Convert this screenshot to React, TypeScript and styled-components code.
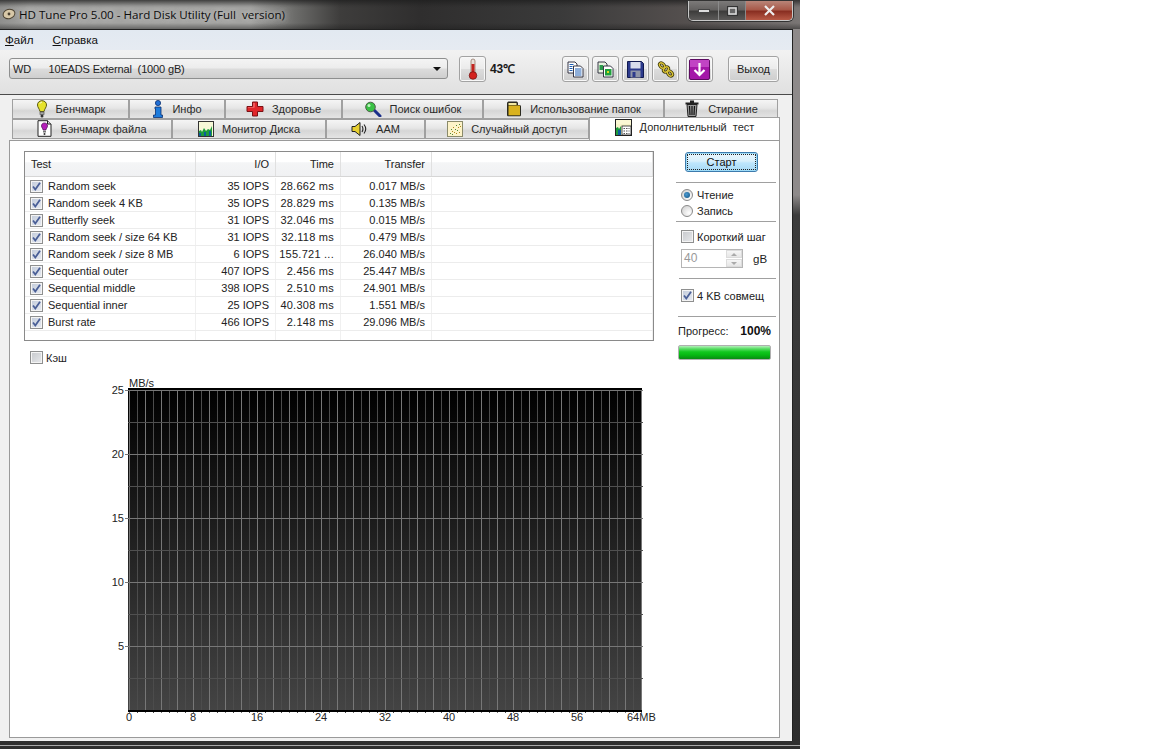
import React from "react";
import styled, { createGlobalStyle } from "styled-components";

const Global = createGlobalStyle`
  html, body { margin: 0; padding: 0; background: #fff; }
  body { font-family: "Liberation Sans", Arial, sans-serif; font-size: 11px; color: #222; overflow: hidden; }
  * { box-sizing: border-box; }
`;

const Win = styled.div`
  width: 800px; height: 749px; display: flex; flex-direction: column;
  background:
    linear-gradient(#a8a8a8, #a8a8a8) 0 745px / 100% 1px no-repeat,
    linear-gradient(180deg, #8e8a8a 0, #8e8a8a 195px, #3c3c3c 215px, #2e2e2e 100%);
`;
const TitleBar = styled.div`
  height: 29px; flex: none; display: flex; align-items: flex-start; padding-right: 7px;
  background:
    linear-gradient(180deg, rgba(30,30,30,.75) 0, rgba(30,30,30,.1) 6px, transparent 8px, transparent 23px, rgba(30,30,30,.45) 29px),
    linear-gradient(90deg, #8f8f8d 0, #a3a3a1 30px, #a3a3a1 250px, #6c6c6a 295px, #3e3d3c 340px, #2f2e2e 420px, #3a3a3a 560px, #55504f 690px, #7a7675 800px);
`;
const TitleWrap = styled.div`
  flex: 1; height: 29px; display: flex; align-items: center; gap: 3px; padding: 0 0 1px 2px;
`;
const TitleText = styled.span`
  font-family: "Open Sans", sans-serif; font-size: 11.6px; color: #0c0c0c; white-space: pre;
  text-shadow: 0 0 5px #ccc, 0 0 9px #bbb;
`;
const WinBtns = styled.div`
  display: flex; height: 20px; margin-top: 1px; border: 1px solid #c8c8c8; border-top: none;
  border-radius: 0 0 5px 5px; overflow: hidden; box-shadow: 0 0 0 1px #333;
`;
const WinBtn = styled.div<{ $w: number; $close?: boolean }>`
  width: ${p => p.$w}px; display: flex; align-items: center; justify-content: center;
  border-left: 1px solid #8a8a8a;
  background: ${p => p.$close
    ? "linear-gradient(180deg,#b98578 0,#a85a4a 45%,#8a2f22 55%,#b85a46 100%)"
    : "linear-gradient(180deg,#7c7a79 0,#646261 45%,#3e3d3c 55%,#5c5a59 100%)"};
  &:first-child { border-left: none; }
`;
const Client = styled.div`
  flex: 1; margin: 0 7px 8px 0; display: flex; flex-direction: column; min-height: 0;
  background: #f0f0f0; border-top: 1px solid #222; border-right: 1px solid #222;
`;
const MenuBar = styled.div`
  height: 20px; flex: none; display: flex; align-items: center; gap: 19px; padding: 0 0 1px 5px;
  background: linear-gradient(180deg, #e2e9f1 0, #e6ebf2 100%); font-size: 11.6px;
`;
const MenuItem = styled.span`
  color: #111;
  & u { text-decoration: underline; }
`;
const Toolbar = styled.div`
  height: 45px; flex: none; display: flex; align-items: flex-start; padding: 6px 13px 0 9px;
  background: linear-gradient(180deg, #f2f2f2 0, #e0e0e0 100%); border-bottom: 1px solid #4a4a4a;
`;
const Combo = styled.div`
  width: 440px; height: 21px; margin-top: 2px; display: flex; align-items: center; padding: 0 6px 0 3px;
  border: 1px solid #8e8f8f; border-radius: 3px; white-space: pre; color: #222;
  background: linear-gradient(180deg, #f4f4f4 0, #ececec 48%, #dcdcdc 52%, #cfcfcf 100%);
  & > span { flex: 1; letter-spacing: -.15px; }
`;
const ComboArrow = styled.i`
  width: 0; height: 0; border: 4px solid transparent; border-top: 4px solid #111; border-bottom: none;
`;
const IconBtn = styled.div<{ $ml?: number; $w?: number }>`
  width: ${p => p.$w ?? 27}px; height: 26px; margin-left: ${p => p.$ml ?? 3}px; flex: none;
  display: flex; align-items: center; justify-content: center; color: #222;
  border: 1px solid #a2a2a2; border-radius: 3px; box-shadow: inset 0 0 0 1px #f8f8f8;
  background: linear-gradient(180deg, #f6f6f6 0, #ebebeb 48%, #dcdcdc 52%, #cdcdcd 100%);
`;
const Temp = styled.b`
  margin: 0 44px 0 4px; width: 28px; height: 26px; line-height: 27px; font-size: 12px; color: #1a1a1a; letter-spacing: -.3px;
`;
const TabsArea = styled.div`
  flex: none; padding: 4px 0 0 12px; position: relative; z-index: 1; height: 45px;
`;
const TabRow = styled.div`
  display: flex; height: 20px; align-items: flex-end;
`;
const Tab = styled.div<{ $w: number; $active?: boolean }>`
  width: ${p => p.$w}px; height: ${p => (p.$active ? 23 : 20)}px; flex: none; display: flex;
  align-items: center; justify-content: center; gap: 8px; white-space: pre; color: #2a2a2a;
  border: 1px solid #a0a0a0; border-bottom: ${p => (p.$active ? "none" : "1px solid #a0a0a0")};
  background: ${p => p.$active ? "#fff" : "linear-gradient(180deg,#f5f5f5 0,#e6e6e6 45%,#d6d6d6 60%,#e4e4e4 100%)"};
  position: relative; padding-bottom: ${p => (p.$active ? 4 : 1)}px;
  margin-bottom: ${p => (p.$active ? -1 : 0)}px;
`;
const Panel = styled.div`
  flex: 1; min-height: 0; margin: 0 12px 3px 9px; background: #fff; border: 1px solid #9a9a9a;
  display: flex; gap: 22px; padding: 10px 0 0 14px;
`;
const Left = styled.div`
  width: 630px; flex: none; display: flex; flex-direction: column;
`;
const Table = styled.div`
  height: 190px; border: 1px solid #8a8a8a; display: flex; flex-direction: column; overflow: hidden;
`;
const Cols = styled.div`
  display: grid; grid-template-columns: 171px 80px 65px 91px 1fr;
`;
const HeadRow = styled(Cols)`
  height: 25px; flex: none; border-bottom: 1px solid #d6d6d6;
  background: linear-gradient(180deg, #fff 0, #fff 40%, #f4f5f6 45%, #f0f1f3 100%);
`;
const HeadCell = styled.div<{ $left?: boolean }>`
  display: flex; align-items: center; justify-content: ${p => (p.$left ? "flex-start" : "flex-end")};
  padding: ${p => (p.$left ? "0 0 0 6px" : "0 6px 0 0")}; border-right: 1px solid #e0e0e0; color: #222;
`;
const Row = styled(Cols)`
  height: 17px; flex: none; border-bottom: 1px solid #ececec;
`;
const EmptyRow = styled(Cols)`
  flex: 1;
`;
const Cell = styled.div<{ $left?: boolean; $ls?: number }>`
  display: flex; align-items: center; gap: 5px; white-space: nowrap; overflow: hidden; color: #222;
  letter-spacing: ${p => p.$ls ?? 0}px;
  justify-content: ${p => (p.$left ? "flex-start" : "flex-end")};
  padding: ${p => (p.$left ? "0 0 0 5px" : "0 6px 1px 0")}; border-right: 1px solid #f0f0f0;
`;
const RowLabel = styled.span`
  margin-top: -1px;
`;
const RowsTop = styled.div`
  height: 1px; flex: none;
`;
const Box = styled.div<{ $on?: boolean }>`
  width: 13px; height: 13px; flex: none; border: 1px solid #8e8f8f; display: flex; align-items: center; justify-content: center;
  box-shadow: inset 0 0 0 1px #f4f4f4;
  background: ${p => p.$on ? "linear-gradient(135deg, #c2cbda 0, #e8ebf2 100%)" : "linear-gradient(135deg, #c6c8cc 0, #e8e9ec 100%)"};
`;
const CheckLine = styled.label<{ $mt?: number }>`
  display: flex; align-items: center; gap: 3px; height: 13px; margin-top: ${p => p.$mt ?? 0}px; color: #222; white-space: nowrap;
`;
const CacheLine = styled(CheckLine)`
  margin: 10px 0 0 6px;
`;
const ChartSvg = styled.svg`
  display: block; margin: 11px 0 0 76px; font-family: "Liberation Sans", Arial, sans-serif; font-size: 11px; fill: #222;
`;
const Side = styled.div`
  width: 100px; flex: none; display: flex; flex-direction: column;
`;
const StartBtn = styled.div`
  width: 73px; height: 20px; margin: 1px 0 0 9px; display: flex; align-items: center; justify-content: center; color: #111;
  border: 1px solid #3d7bad; border-radius: 3px; outline: 1px dotted #222; outline-offset: -3px;
  box-shadow: inset 0 0 0 1px #9fdcf8;
  background: linear-gradient(180deg, #eaf6fd 0, #d9f0fc 45%, #bee6fd 55%, #a7d9f5 100%);
`;
const Sep = styled.div<{ $mt: number; $ml?: number }>`
  height: 1px; background: #a0a0a0; margin: ${p => p.$mt}px 0 0 ${p => p.$ml ?? 0}px;
`;
const RadioLine = styled.div<{ $mt: number }>`
  display: flex; align-items: center; gap: 4px; height: 12px; margin: ${p => p.$mt}px 0 0 5px; color: #222;
`;
const Radio = styled.div<{ $on?: boolean }>`
  width: 12px; height: 12px; border-radius: 50%; border: 1px solid #8a8a8a; display: flex; align-items: center; justify-content: center;
  background: radial-gradient(circle at 70% 70%, #fff 0, #d6d6d6 80%);
  &::after { content: ""; width: 6px; height: 6px; border-radius: 50%; background: ${p => (p.$on ? "radial-gradient(circle at 40% 40%,#4a9ad0,#0f4f80)" : "transparent")}; }
`;
const SideCheck = styled(CheckLine)`
  margin-left: 5px;
`;
const SpinLine = styled.div`
  display: flex; align-items: center; margin: 6px 0 0 5px; height: 19px;
`;
const Spin = styled.div`
  width: 62px; height: 19px; border: 1px solid #b5b5b5; display: flex; background: #fff;
`;
const SpinVal = styled.div`
  flex: 1; color: #999; padding-left: 2px; line-height: 17px; font-size: 12px;
`;
const SpinBtns = styled.div`
  width: 16px; display: flex; flex-direction: column; gap: 1px;
`;
const SpinBtn = styled.div<{ $up?: boolean }>`
  flex: 1; display: flex; align-items: center; justify-content: center; border: 1px solid #dcdcdc;
  background: linear-gradient(180deg, #f6f6f6, #e6e6e6);
  &::after { content: ""; border: 3px solid transparent; ${p => (p.$up ? "border-bottom: 3px solid #aaa; border-top: none;" : "border-top: 3px solid #aaa; border-bottom: none;")} }
`;
const SpinUnit = styled.span`
  margin-left: 10px; color: #222; font-size: 11.5px;
`;
const ProgressHead = styled.div`
  display: flex; justify-content: space-between; width: 93px; margin: 7px 0 0 2px; color: #222; height: 14px; align-items: center;
  & b { color: #111; font-size: 12px; }
`;
const Bar = styled.div`
  width: 93px; height: 15px; margin: 7px 0 0 2px; border: 1px solid #b0b0b0; border-radius: 2px;
  background: linear-gradient(180deg, #b4f0ba 0, #58dc64 22%, #12c81f 45%, #06b812 70%, #0a8a14 100%);
`;

/* ---------- icons ---------- */
const S: React.FC<{ w?: number; h?: number; children: React.ReactNode }> = ({ w = 16, h = 16, children }) => (
  <svg width={w} height={h} viewBox={`0 0 ${w} ${h}`} style={{ flex: "none" }}>{children}</svg>
);
const BulbIcon = () => (
  <S w={12} h={18}>
    <path d="M6 .7C3.2.7 1.500 2.600 1.500 5c0 2.400 2 3.800 2.500 6.500h4C8.500 8.800 10.500 7.400 10.500 5 10.500 2.600 8.800.7 6 .7z" fill="#e6e22c" stroke="#5b5a10" />
    <rect x="4" y="12" width="4" height="2.500" fill="#aaa" stroke="#555" strokeWidth=".7" />
    <circle cx="6" cy="16" r="1.500" fill="#333" />
    <path d="M4 3.500c.5-1 1-1.300 2-1.300" stroke="#fff" fill="none" />
  </S>
);
const InfoIcon = () => (
  <S w={12} h={18}>
    <circle cx="6" cy="3" r="2.600" fill="#1f6fd6" stroke="#0a2f70" strokeWidth=".8" />
    <path d="M3 7h6v8h1.500v2.500h-9V15H3.500v-6H3z" fill="#1c7bdc" stroke="#0a2f70" strokeWidth=".8" />
  </S>
);
const CrossIcon = () => (
  <S w={18} h={16}>
    <path d="M6.500 1h5v4.500H17v5h-5.500V15h-5v-4.500H1v-5h5.500z" fill="#e0262a" stroke="#7a1014" />
    <path d="M7.500 2h1v4.500H2v-.6h5.500z" fill="#f88" />
  </S>
);
const SearchIcon = () => (
  <S w={18} h={16}>
    <path d="M10 9l6 6" stroke="#1a2f8a" strokeWidth="3" strokeLinecap="round" />
    <circle cx="6.500" cy="6" r="4.800" fill="#39c144" stroke="#4f5f4a" />
    <circle cx="5" cy="4.500" r="1.500" fill="#c4f4c4" />
  </S>
);
const FolderIcon = () => (
  <S w={16} h={17}>
    <path d="M1 3.500C1 2 2 1.500 3 1.500h7c1 0 2 .5 2 2V5h1.500c.8 0 1.500.6 1.500 1.500V15c0 .8-.6 1.300-1.500 1.300h-11C1.600 16.300 1 15.800 1 15z" fill="#2b2a20" />
    <rect x="2.500" y="5.500" width="11.500" height="9.800" fill="#d9b21e" />
    <rect x="2.500" y="3" width="8" height="2" fill="#f2e8a0" />
  </S>
);
const TrashIcon = () => (
  <S w={16} h={17}>
    <path d="M6 1.500h4M1.500 3.500h13" stroke="#222" strokeWidth="2" />
    <path d="M3 4.500h10l-1 12H4z" fill="#999" stroke="#222" />
    <path d="M5.500 6l.5 9M8 6v9M10.500 6l-.5 9" stroke="#111" strokeWidth="1.200" />
  </S>
);
const FileBulbIcon = () => (
  <S w={15} h={17}>
    <path d="M1 .7h9.500L14 4v12.300H1z" fill="#fff" stroke="#222" />
    <path d="M10.500.7V4H14" fill="#ddd" stroke="#222" />
    <path d="M7.500 3C5.500 3 4.500 4.300 4.500 6c0 1.500 1.300 2.300 1.600 4h2.800c.3-1.700 1.600-2.500 1.600-4C10.500 4.300 9.500 3 7.500 3z" fill="#b41fb8" stroke="#4a0b50" strokeWidth=".7" />
    <rect x="6" y="10.700" width="3" height="1.800" fill="#777" />
    <circle cx="7.500" cy="14" r="1" fill="#333" />
  </S>
);
const MonitorIcon = () => (
  <S w={16} h={16}>
    <rect x=".5" y=".5" width="15" height="15" fill="#f6f8d8" stroke="#333" />
    <path d="M1 15V10l2-1 1 2 2-4 2 3 2-2 2 1 2-4v10z" fill="#1c9c3c" />
    <path d="M1 15v-3h2v3zM6 15v-4h2v4zM11 15v-5h2v5z" fill="#0d5c9c" />
  </S>
);
const SpeakerIcon = () => (
  <S w={17} h={16}>
    <path d="M1 5.500h3L9 1.500v13L4 10.500H1z" fill="#e8d030" stroke="#222" />
    <path d="M11 5c1 1.600 1 4.400 0 6M13 3.500c2 2.600 2 6.400 0 9" stroke="#222" fill="none" strokeWidth="1.100" />
  </S>
);
const ScatterIcon = () => (
  <S w={16} h={16}>
    <rect x=".5" y=".5" width="15" height="15" fill="#fdf3c8" stroke="#8a8a6a" />
    {[[3,12],[5,10],[4,8],[7,11],[8,8],[6,6],[10,9],[11,6],[9,4],[13,5],[12,3],[12,11],[5,13],[9,12]].map(([x, y], i) => (
      <rect key={i} x={x} y={y} width="1" height="1" fill={i % 2 ? "#b08a1c" : "#4c8a3a"} />
    ))}
  </S>
);
const CalcIcon = () => (
  <S w={17} h={17}>
    <rect x=".5" y=".5" width="16" height="16" fill="#f6f4c8" stroke="#222" />
    <rect x="1" y="1" width="15" height="4" fill="#fbf8d4" />
    <path d="M1 16V9l2-1 1 2 2-3v9z" fill="#1c9c3c" />
    <rect x="3" y="11" width="3" height="5" fill="#0d5c9c" />
    <rect x="7" y="7" width="9" height="9" fill="#fff" stroke="#222" strokeWidth=".8" />
    <path d="M8.500 9.500h6M8.500 12h6M8.500 14.500h6" stroke="#555" strokeDasharray="1.500 1" />
  </S>
);
const ThermoIcon = () => (
  <S w={12} h={22}>
    <rect x="4" y="1" width="4" height="15" rx="2" fill="#e7dfd8" stroke="#8a6a5a" strokeWidth=".7" />
    <rect x="4.500" y="6" width="3" height="10" fill="#c22420" />
    <circle cx="6" cy="17.500" r="3.800" fill="#d3221e" stroke="#6b1010" strokeWidth=".7" />
  </S>
);
const CopyIcon = () => (
  <S w={17} h={17}>
    <path d="M1 1h7l2 2v9H1z" fill="#fff" stroke="#223" strokeWidth=".9" />
    <path d="M6.500 5h7l2.500 2.500V16H6.500z" fill="#fff" stroke="#223" strokeWidth=".9" />
    <path d="M2.500 3.500h4M2.500 5.500h3M2.500 7.500h3M2.500 9.500h3" stroke="#1f5fb4" />
    <path d="M8 8h6.500M8 10h6.500M8 12h6.500M8 14h6.500" stroke="#1f5fb4" />
  </S>
);
const CopyImgIcon = () => (
  <S w={17} h={17}>
    <path d="M1 1h7l2 2v9H1z" fill="#e8f2e0" stroke="#223" strokeWidth=".9" />
    <path d="M6.500 5h7l2.500 2.500V16H6.500z" fill="#fff" stroke="#223" strokeWidth=".9" />
    <rect x="2.500" y="4" width="3.500" height="5" fill="#2a9a4a" />
    <rect x="8" y="8" width="6.500" height="6.500" fill="#1fa03c" />
    <rect x="10" y="10" width="2" height="2" fill="#d8d820" />
  </S>
);
const FloppyIcon = () => (
  <S w={17} h={17}>
    <path d="M.5.5h14l2 2v14H.5z" fill="#2c3a8c" stroke="#111a50" />
    <rect x="3.500" y="1" width="10" height="6.500" fill="#d8dcec" />
    <rect x="3.500" y="9.500" width="10" height="7" fill="#8f96a8" />
    <rect x="5.500" y="11" width="3" height="5" fill="#2c3a8c" />
  </S>
);
const ChainIcon = () => (
  <S w={18} h={17}>
    <g fill="none" strokeWidth="3" stroke="#3e3a0c">
      <ellipse cx="5" cy="4.500" rx="3" ry="2" transform="rotate(45 5 4.500)" />
      <ellipse cx="9" cy="8.500" rx="3" ry="2" transform="rotate(-45 9 8.500)" />
      <ellipse cx="13" cy="12.500" rx="3" ry="2" transform="rotate(45 13 12.500)" />
    </g>
    <g fill="none" strokeWidth="1.400" stroke="#dcc438">
      <ellipse cx="5" cy="4.500" rx="3" ry="2" transform="rotate(45 5 4.500)" />
      <ellipse cx="9" cy="8.500" rx="3" ry="2" transform="rotate(-45 9 8.500)" />
      <ellipse cx="13" cy="12.500" rx="3" ry="2" transform="rotate(45 13 12.500)" />
    </g>
  </S>
);
const ArrowIcon = () => (
  <S w={21} h={21}>
    <rect x=".5" y=".5" width="20" height="20" rx="1.500" fill="#a416a8" stroke="#5c0a60" />
    <rect x="1" y="1" width="19" height="7" fill="#c144c4" />
    <path d="M10.500 4v12M5.500 11l5 5 5-5" stroke="#fff" strokeWidth="2.200" fill="none" />
  </S>
);
const AppIcon = () => (
  <S w={14} h={14}>
    <ellipse cx="7" cy="7" rx="6" ry="4.600" fill="#d8c8a8" stroke="#4a4030" transform="rotate(-15 7 7)" />
    <circle cx="7" cy="7" r="1.400" fill="#4a4030" />
  </S>
);
const Check = () => (
  <svg width="11" height="11" viewBox="0 0 11 11"><path d="M2 5.500l2.300 3L9 1.800" fill="none" stroke="#4a5f97" strokeWidth="1.800" /></svg>
);

/* ---------- data ---------- */
const row1 = [
  { w: 117, t: "Бенчмарк", i: <BulbIcon /> },
  { w: 96, t: "Инфо", i: <InfoIcon /> },
  { w: 117, t: "Здоровье", i: <CrossIcon /> },
  { w: 141, t: "Поиск ошибок", i: <SearchIcon /> },
  { w: 181, t: "Использование папок", i: <FolderIcon /> },
  { w: 114, t: "Стирание", i: <TrashIcon /> },
];
const row2 = [
  { w: 160, t: "Бэнчмарк файла", i: <FileBulbIcon /> },
  { w: 154, t: "Монитор Диска", i: <MonitorIcon /> },
  { w: 99, t: "AAM", i: <SpeakerIcon /> },
  { w: 164, t: "Случайный доступ", i: <ScatterIcon /> },
];
const rows = [
  ["Random seek", "35 IOPS", "28.662 ms", "0.017 MB/s"],
  ["Random seek 4 KB", "35 IOPS", "28.829 ms", "0.135 MB/s"],
  ["Butterfly seek", "31 IOPS", "32.046 ms", "0.015 MB/s"],
  ["Random seek / size 64 KB", "31 IOPS", "32.118 ms", "0.479 MB/s"],
  ["Random seek / size 8 MB", "6 IOPS", "155.721 ...", "26.040 MB/s"],
  ["Sequential outer", "407 IOPS", "2.456 ms", "25.447 MB/s"],
  ["Sequential middle", "398 IOPS", "2.510 ms", "24.901 MB/s"],
  ["Sequential inner", "25 IOPS", "40.308 ms", "1.551 MB/s"],
  ["Burst rate", "466 IOPS", "2.148 ms", "29.096 MB/s"],
];

const OX = 100, OY = 375;
const Chart = () => {
  const vs = Array.from({ length: 65 }, (_, i) => i);
  const hs = Array.from({ length: 10 }, (_, i) => 15 + 32 * i);
  return (
    <ChartSvg width={560} height={350} viewBox={`${OX} ${OY} 560 350`}>
      <defs>
        <linearGradient id="plot" x1="0" y1="0" x2="0" y2="1">
          <stop offset="0" stopColor="#000" />
          <stop offset="1" stopColor="#444" />
        </linearGradient>
      </defs>
      <rect x={128} y={389} width={514} height={322} fill="url(#plot)" />
      {vs.map(i => (
        <line key={i} x1={129 + i * 8 + .5} x2={129 + i * 8 + .5} y1={390} y2={713}
          stroke={i % 2 === 0 ? "#777" : "#4c4c4c"} />
      ))}
      {hs.map((y, i) => (
        <line key={y} x1={i % 2 === 0 ? 125 : 128} x2={643} y1={OY + y + .5} y2={OY + y + .5}
          stroke={i % 2 === 0 ? "#777" : "#505050"} />
      ))}
      <rect x={128} y={388} width={514} height={2} fill="#000" />
      <rect x={128} y={710} width={514} height={2} fill="#000" />
      {[25, 20, 15, 10, 5].map((v, i) => (
        <text key={v} x={124} y={394 + i * 64} textAnchor="end">{v}</text>
      ))}
      <text x={129} y={387}>MB/s</text>
      {[0, 8, 16, 24, 32, 40, 48, 56].map((v, i) => (
        <text key={v} x={129 + i * 64} y={721} textAnchor="middle">{v}</text>
      ))}
      <text x={627} y={721}>64MB</text>
    </ChartSvg>
  );
};

export default function App() {
  return (
    <Win>
      <Global />
      <TitleBar>
        <TitleWrap>
          <AppIcon />
          <TitleText>HD Tune Pro 5.00 - Hard Disk Utility (Full  version)</TitleText>
        </TitleWrap>
        <WinBtns>
          <WinBtn $w={29}><svg width="12" height="5"><rect x=".5" y="1.500" width="11" height="3" fill="#ddd" stroke="#444" /></svg></WinBtn>
          <WinBtn $w={27}><svg width="11" height="10"><rect x=".5" y=".5" width="10" height="9" fill="#666" stroke="#333" /><rect x="2" y="2" width="7" height="6" fill="none" stroke="#ddd" strokeWidth="1.500" /></svg></WinBtn>
          <WinBtn $w={47} $close><svg width="13" height="11"><path d="M2 1l9 9M11 1l-9 9" stroke="#eee" strokeWidth="2.200" /></svg></WinBtn>
        </WinBtns>
      </TitleBar>
      <Client>
        <MenuBar>
          <MenuItem><u>Ф</u>айл</MenuItem>
          <MenuItem><u>С</u>правка</MenuItem>
        </MenuBar>
        <Toolbar>
          <Combo><span>WD      10EADS External  (1000 gB)</span><ComboArrow /></Combo>
          <IconBtn $ml={11}><ThermoIcon /></IconBtn>
          <Temp>43℃</Temp>
          <IconBtn $ml={0}><CopyIcon /></IconBtn>
          <IconBtn><CopyImgIcon /></IconBtn>
          <IconBtn><FloppyIcon /></IconBtn>
          <IconBtn><ChainIcon /></IconBtn>
          <IconBtn $ml={7}><ArrowIcon /></IconBtn>
          <IconBtn $ml={15} $w={51}>Выход</IconBtn>
        </Toolbar>
        <TabsArea>
          <TabRow>{row1.map(t => <Tab key={t.t} $w={t.w}>{t.i}{t.t}</Tab>)}</TabRow>
          <TabRow>
            {row2.map(t => <Tab key={t.t} $w={t.w}>{t.i}{t.t}</Tab>)}
            <Tab $w={191} $active><CalcIcon />Дополнительный  тест</Tab>
          </TabRow>
        </TabsArea>
        <Panel>
          <Left>
            <Table>
              <HeadRow>
                <HeadCell $left>Test</HeadCell>
                <HeadCell>I/O</HeadCell>
                <HeadCell>Time</HeadCell>
                <HeadCell>Transfer</HeadCell>
                <HeadCell />
              </HeadRow>
              <RowsTop />
              {rows.map(r => (
                <Row key={r[0]}>
                  <Cell $left><Box $on><Check /></Box><RowLabel>{r[0]}</RowLabel></Cell>
                  <Cell>{r[1]}</Cell>
                  <Cell $ls={0.25}>{r[2]}</Cell>
                  <Cell>{r[3]}</Cell>
                  <Cell />
                </Row>
              ))}
              <EmptyRow><Cell /><Cell /><Cell /><Cell /><Cell /></EmptyRow>
            </Table>
            <CacheLine><Box />Кэш</CacheLine>
            <Chart />
          </Left>
          <Side>
            <StartBtn>Старт</StartBtn>
            <Sep $mt={10} />
            <RadioLine $mt={6}><Radio $on />Чтение</RadioLine>
            <RadioLine $mt={4}><Radio />Запись</RadioLine>
            <Sep $mt={4} />
            <SideCheck $mt={8}><Box />Короткий шаг</SideCheck>
            <SpinLine>
              <Spin><SpinVal>40</SpinVal><SpinBtns><SpinBtn $up /><SpinBtn /></SpinBtns></Spin>
              <SpinUnit>gB</SpinUnit>
            </SpinLine>
            <Sep $mt={10} $ml={3} />
            <SideCheck $mt={10}><Box $on><Check /></Box>4 KB совмещ</SideCheck>
            <Sep $mt={14} $ml={2} />
            <ProgressHead>Прогресс: <b>100%</b></ProgressHead>
            <Bar />
          </Side>
        </Panel>
      </Client>
    </Win>
  );
}
